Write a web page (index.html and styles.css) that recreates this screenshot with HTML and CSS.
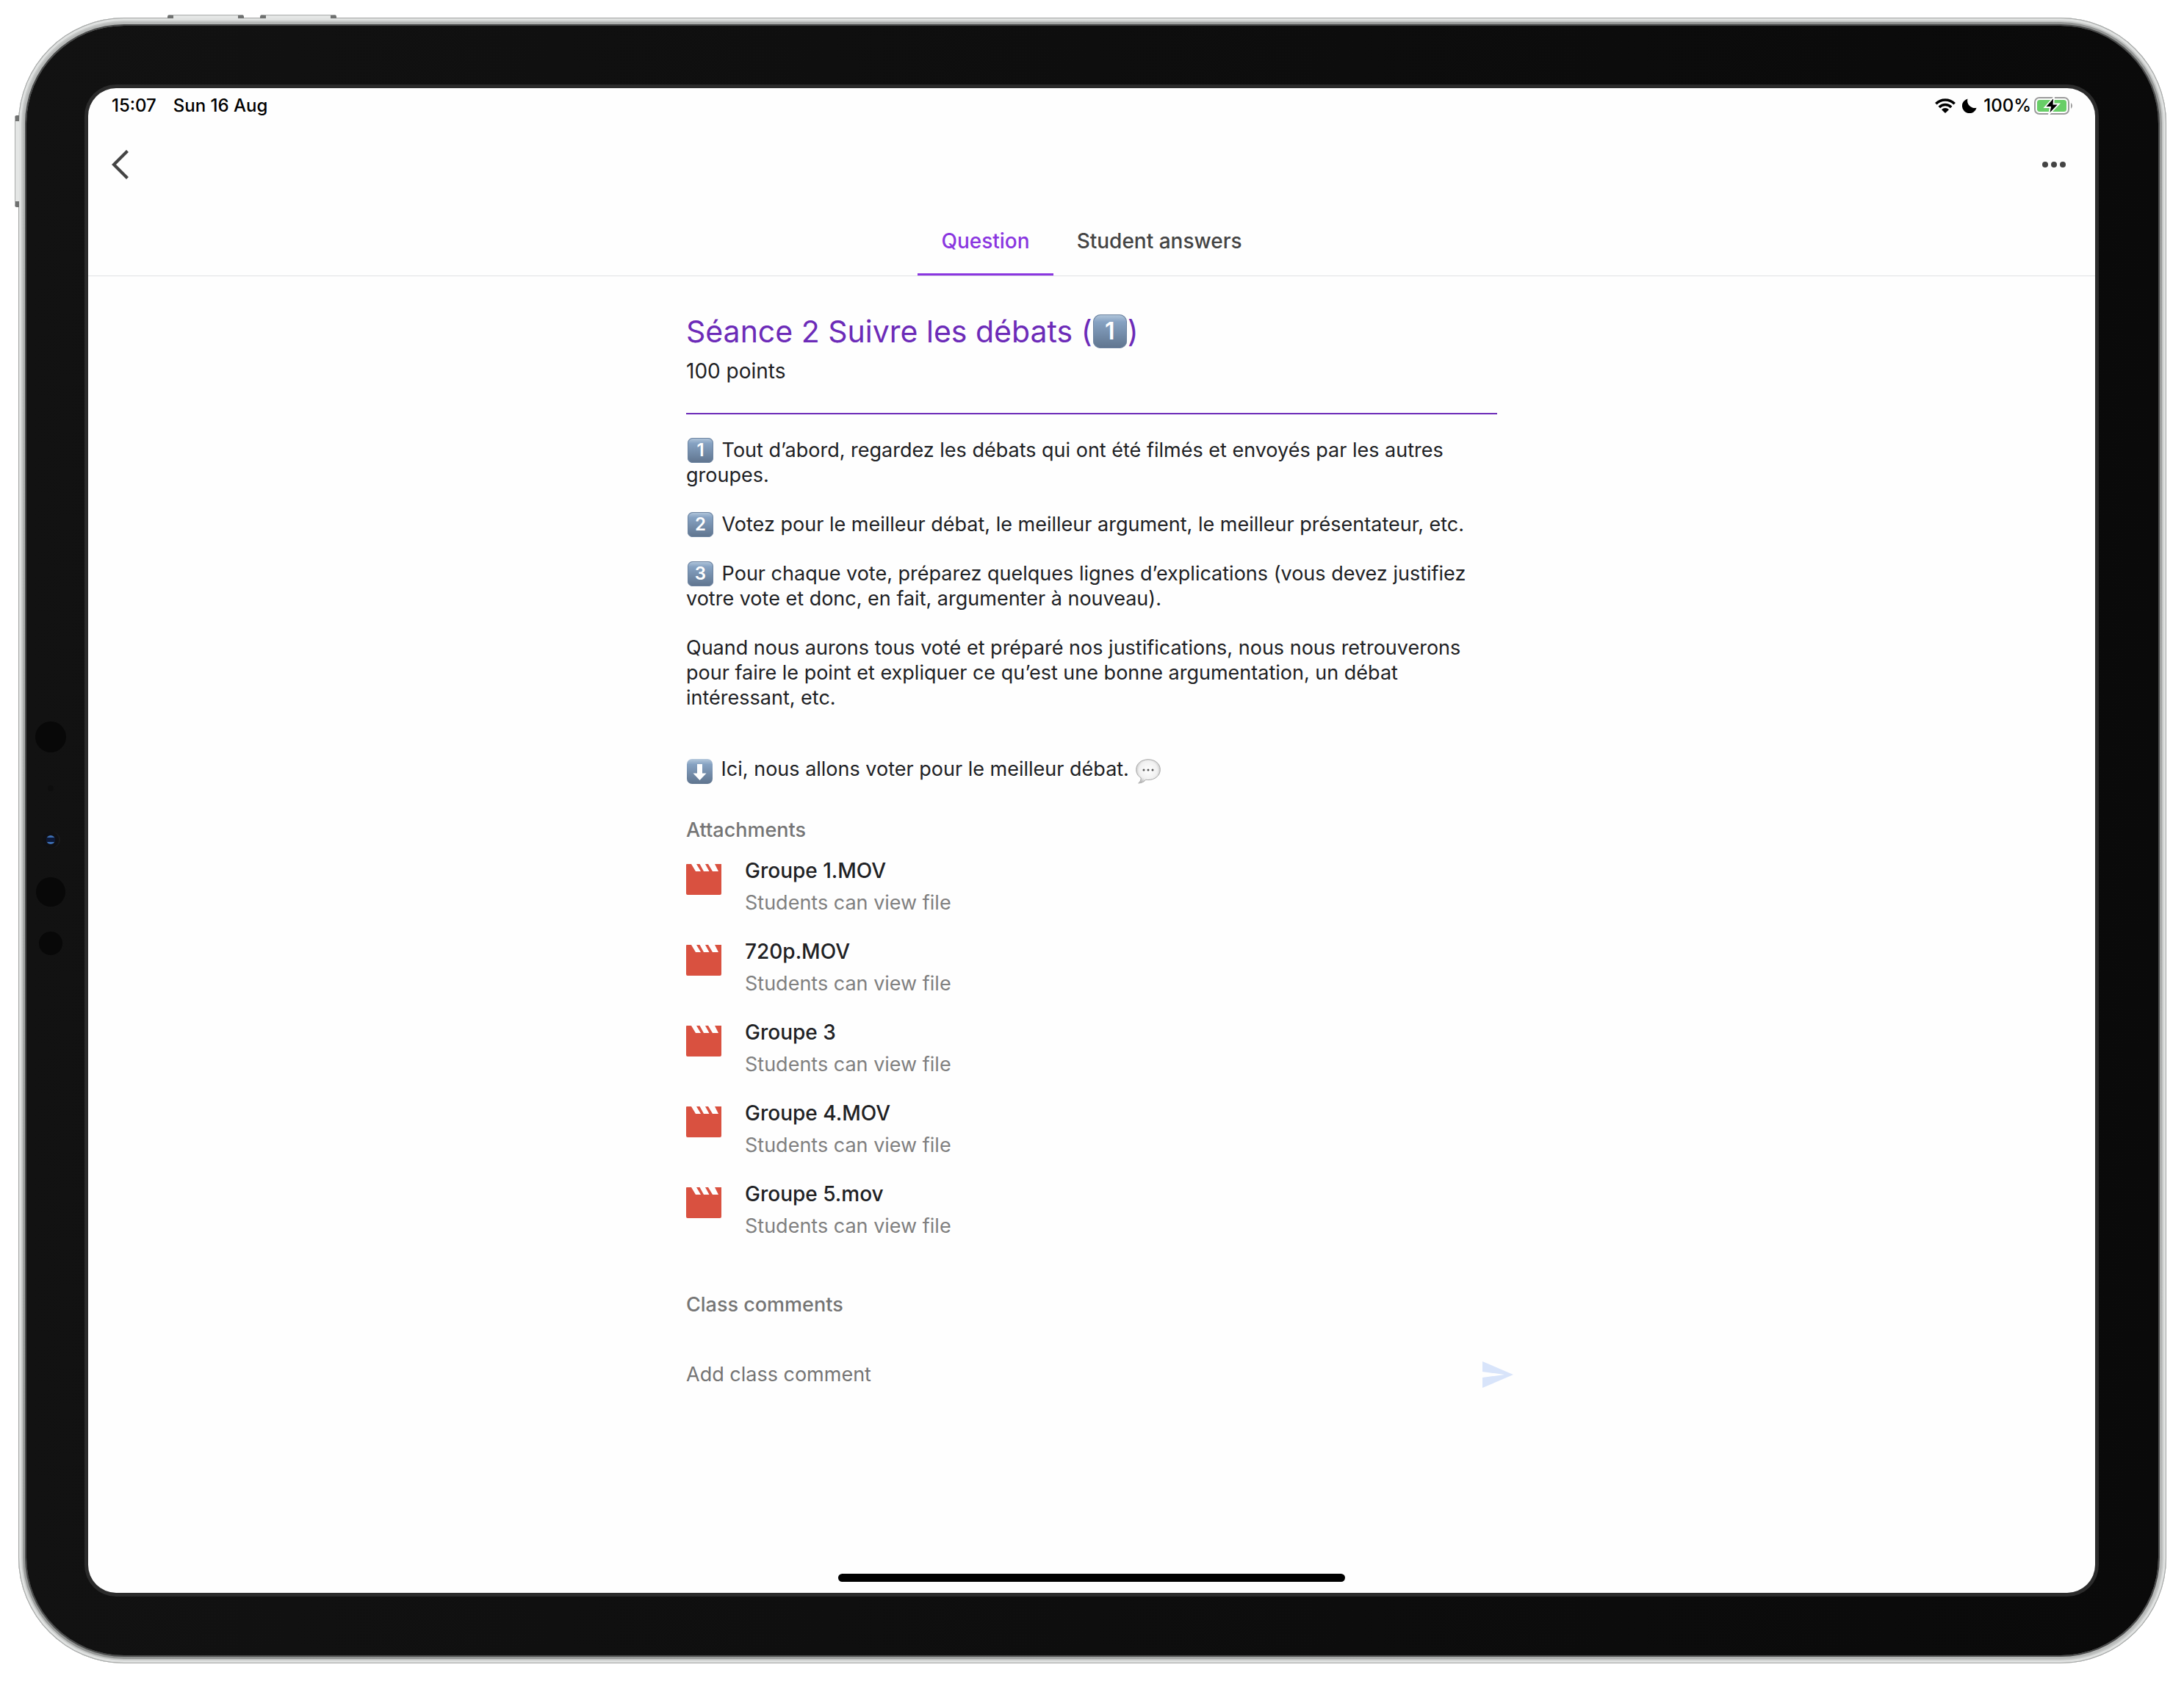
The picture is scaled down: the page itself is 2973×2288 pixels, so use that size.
FILE: index.html
```html
<!DOCTYPE html>
<html lang="fr">
<head>
<meta charset="utf-8">
<meta name="viewport" content="width=device-width, initial-scale=1">
<title>Séance 2 Suivre les débats</title>
<link rel="stylesheet" href="styles.css">
</head>
<body>
<svg class="defs" width="0" height="0" aria-hidden="true">
  <defs>
    <linearGradient id="key" x1="0" y1="0" x2="0" y2="1">
      <stop offset="0" stop-color="#b4c8dc"/><stop offset=".22" stop-color="#86a2c2"/><stop offset="1" stop-color="#5f748e"/>
    </linearGradient>
    <radialGradient id="bubble" cx=".5" cy=".45" r=".55">
      <stop offset="0" stop-color="#fff"/><stop offset=".7" stop-color="#f0f0f0"/><stop offset="1" stop-color="#bdbdbd"/>
    </radialGradient>
    <symbol id="clip" viewBox="0 0 48 42">
      <path fill="#d95140" d="M1 0H7L13 10H20L14 0H18.500L24 10H31.500L26 0H30L36 10H44L39 0H48V40a2 2 0 0 1-2 2H2a2 2 0 0 1-2-2V1a1 1 0 0 1 1-1z"/>
    </symbol>
  </defs>
</svg>
<div class="device">
  <span class="hw hw-vol-a"></span><span class="hw hw-vol-b"></span><span class="hw hw-power"></span>
  <div class="bezel">
    <svg class="sensors" width="44" height="304" viewBox="0 0 44 304" aria-hidden="true">
      <circle cx="22" cy="22" r="21" fill="#080808"/>
      <circle cx="22" cy="92" r="4" fill="#0e0e0e"/>
      <circle cx="24" cy="162" r="11" fill="#1a1a1b"/><circle cx="22" cy="162" r="11" fill="#101012"/>
      <circle cx="22" cy="162" r="6" fill="#3d6fb5"/><path d="M16 159h12v6H16z" fill="#0c1836"/>
      <circle cx="22" cy="233" r="20" fill="#080808"/>
      <circle cx="22" cy="303" r="16" fill="#080808"/>
    </svg>
    <div class="screen">
      <header>
        <div class="status">
          <span>15:07</span><span>Sun 16 Aug</span>
          <div class="status-right">
            <svg width="28" height="20" viewBox="0 0 28 20" aria-hidden="true">
              <g fill="none" stroke="#000" stroke-width="3.600"><path d="M1.300 7.300A18 18 0 0 1 26.700 7.300"/><path d="M5.800 11.900A11.600 11.600 0 0 1 22.200 11.900"/></g>
              <path d="M9 15.200A7 7 0 0 1 19 15.200L14 20z"/>
            </svg>
            <svg class="moon" width="20" height="20" viewBox="0 0 20 20" aria-hidden="true"><path d="M7.500 .5A10 10 0 1 0 19.600 12.800A10 10 0 0 1 7.500 .5z"/></svg>
            <span>100%</span>
            <svg class="battery" width="54" height="26" viewBox="0 0 54 26" aria-hidden="true">
              <rect x="1" y="2" width="46" height="22" rx="6" fill="none" stroke="#9b9b9b" stroke-width="2"/>
              <rect x="4" y="5" width="40" height="16" rx="3.500" fill="#68ce67"/>
              <path d="M50 9a5 5 0 0 1 0 8z" fill="#9b9b9b"/>
              <path d="M27 1L14.500 15H22L20 25L34 10.500H26.500z" fill="#000" stroke="#fff" stroke-width="1.800"/>
            </svg>
          </div>
        </div>
        <div class="nav">
          <button class="icon-btn" aria-label="Back"><svg width="24" height="40" viewBox="0 0 24 40"><path d="M21.500 1.500L3 20L21.500 38.500" fill="none" stroke="#444" stroke-width="4.200"/></svg></button>
          <button class="icon-btn" aria-label="More options"><svg width="32" height="8" viewBox="0 0 32 8" fill="#444"><circle cx="4" cy="4" r="4"/><circle cx="16" cy="4" r="4"/><circle cx="28" cy="4" r="4"/></svg></button>
        </div>
        <nav class="tabs">
          <a href="#question" class="tab active">Question</a>
          <a href="#answers" class="tab">Student answers</a>
        </nav>
      </header>
      <main id="question">
        <h1>Séance 2 Suivre les débats (<span class="key">1</span>)</h1>
        <p class="points">100 points</p>
        <section class="text">
          <p><span class="key">1</span> Tout d’abord, regardez les débats qui ont été filmés et envoyés par les autres groupes.</p>
          <p><span class="key">2</span> Votez pour le meilleur débat, le meilleur argument, le meilleur présentateur, etc.</p>
          <p><span class="key">3</span> Pour chaque vote, préparez quelques lignes d’explications (vous devez justifiez votre vote et donc, en fait, argumenter à nouveau).</p>
          <p>Quand nous aurons tous voté et préparé nos justifications, nous nous retrouverons pour faire le point et expliquer ce qu’est une bonne argumentation, un débat intéressant, etc.</p>
          <p class="last"><svg class="glyph arrow" width="36" height="34" viewBox="0 0 36 34" aria-hidden="true"><rect x="1" y="0" width="35" height="34" rx="7" fill="url(#key)"/><path d="M15 7h7v12.500h5.500L18.500 29L9.500 19.500H15z" fill="#fff"/></svg> Ici, nous allons voter pour le meilleur débat. <svg class="glyph" width="36" height="34" viewBox="0 0 36 34" aria-hidden="true"><path d="M18 .7C8.500 .7 1.700 6.500 1.700 14.500c0 5 2.500 9 6.500 11.300 0 2.800-1 5.200-3.500 7.200 4.500-.3 8-2 10-4.800 1 .2 2 .3 3.300 .3C27.500 28.500 34.300 22.500 34.300 14.500S27.500 .7 18 .7z" fill="url(#bubble)" stroke="#a9a9a9" stroke-width="1"/><g fill="#555"><circle cx="12" cy="15" r="1.500"/><circle cx="18" cy="15" r="1.500"/><circle cx="24" cy="15" r="1.500"/></g></svg></p>
        </section>
        <section>
          <h2>Attachments</h2>
          <ul class="files">
            <li><svg class="clip" width="48" height="42" aria-hidden="true"><use href="#clip"/></svg><div><a href="#file-1">Groupe 1.MOV</a><p>Students can view file</p></div></li>
            <li><svg class="clip" width="48" height="42" aria-hidden="true"><use href="#clip"/></svg><div><a href="#file-2">720p.MOV</a><p>Students can view file</p></div></li>
            <li><svg class="clip" width="48" height="42" aria-hidden="true"><use href="#clip"/></svg><div><a href="#file-3">Groupe 3</a><p>Students can view file</p></div></li>
            <li><svg class="clip" width="48" height="42" aria-hidden="true"><use href="#clip"/></svg><div><a href="#file-4">Groupe 4.MOV</a><p>Students can view file</p></div></li>
            <li><svg class="clip" width="48" height="42" aria-hidden="true"><use href="#clip"/></svg><div><a href="#file-5">Groupe 5.mov</a><p>Students can view file</p></div></li>
          </ul>
        </section>
        <section class="comments">
          <h2>Class comments</h2>
          <form class="composer">
            <input type="text" placeholder="Add class comment" aria-label="Add class comment">
            <button type="button" class="icon-btn" aria-label="Send"><svg width="42" height="36" viewBox="0 0 42 36"><path d="M0 0L42 18L0 36V22L30 18L0 14z" fill="#d8e4fa"/></svg></button>
          </form>
        </section>
      </main>
      <div class="home"></div>
    </div>
  </div>
</div>
</body>
</html>
```
FILE: styles.css
```css
* { box-sizing: border-box; }
body {
  margin: 0;
  min-height: 100vh;
  padding: 24px 24px 24px 25px;
  display: flex;
  background: #fff;
  color: #202124;
  font: 400 27px/34px Inter, "Liberation Sans", sans-serif;
}
h1, h2, p, ul { margin: 0; padding: 0; font-weight: 400; }
.defs { position: absolute; }

.device {
  flex: 1;
  display: flex;
  position: relative;
  padding: 11px;
  border-radius: 144px;
  background: linear-gradient(135deg, #b9bbba, #8f9190 50%, #b9bbba);
  box-shadow: inset 0 0 0 1px #a3a5a4, inset 0 0 0 4px #dfe1e0, inset 0 0 0 6px #c6c8c7;
}
.bezel {
  flex: 1;
  display: flex;
  position: relative;
  padding: 80px 81px 80px 79px;
  border-radius: 133px;
  background: linear-gradient(90deg, #121212, #0a0a0a);
  box-shadow: 0 0 0 2px #4a4b4b;
}
.sensors {
  position: absolute;
  left: 11px;
  top: 50%;
  margin-top: -163px;
  overflow: visible;
}
.hw { position: absolute; background: #e4e6e5; border: 1px solid #a9abaa; }
.hw-vol-a, .hw-vol-b { top: -4px; height: 5px; width: 104px; border-width: 1px 8px 0; border-color: #a9abaa #6f7170; border-radius: 3px 3px 0 0; }
.hw-vol-a { left: 203px; }
.hw-vol-b { left: 329px; }
.hw-power { left: -5px; top: 133px; width: 6px; height: 125px; border-width: 8px 0 8px 1px; border-color: #6f7170 #a9abaa; border-radius: 3px 0 0 3px; }

.screen {
  flex: 1;
  display: flex;
  flex-direction: column;
  margin: 5px;
  border-radius: 38px;
  background: #fefefe;
  box-shadow: 0 0 0 5px #2b2b2b;
}
.status {
  display: flex;
  align-items: center;
  gap: 23px;
  height: 48px;
  padding: 0 29px 0 32px;
  color: #000;
  font-size: 24px;
  font-weight: 500;
}
.status-right { display: flex; align-items: center; margin-left: auto; }
.moon { margin: 0 9px; }
.battery { margin-left: 4px; }
.nav {
  display: flex;
  align-items: center;
  justify-content: space-between;
  height: 112px;
  padding: 0 40px 0 32px;
}
.icon-btn { display: flex; padding: 0; border: 0; background: none; }
.tabs {
  display: flex;
  justify-content: center;
  height: 96px;
  border-bottom: 1px solid #dfe1e3;
}
.tab {
  display: flex;
  align-items: center;
  padding: 4px 32px 0;
  border-bottom: 3px solid transparent;
  color: #444;
  font-size: 28px;
  font-weight: 500;
  text-decoration: none;
}
.tab.active { color: #8a36e0; border-color: #8a36e0; }

main {
  width: 100%;
  max-width: 1104px;
  margin: 0 auto;
  padding-top: 48px;
}
h1 { color: #6c2bb8; font-size: 41px; line-height: 54px; }
.key {
  display: inline-flex;
  align-items: center;
  justify-content: center;
  width: 35px;
  height: 34px;
  margin: -4px 4px -4px 2px;
  border-radius: 7px;
  background: linear-gradient(#b4c8dc, #86a2c2 22%, #5f748e);
  box-shadow: inset 0 0 0 1px #6c83a0;
  color: #fff;
  font-size: 24px;
  font-weight: 600;
  line-height: 24px;
  vertical-align: 1px;
}
h1 .key {
  width: 46px;
  height: 46px;
  margin: -4px 1px;
  border-radius: 10px;
  font-size: 32px;
  line-height: 32px;
  vertical-align: 4px;
}
.points { margin-top: 10px; padding-bottom: 40px; border-bottom: 2px solid #6c2bb8; font-size: 28px; }
.text { padding-top: 32px; }
.text p + p { margin-top: 33px; }
.text .last { margin-top: 63px; }
.glyph { margin-block: -4px; vertical-align: -7px; }
.arrow { margin-right: 4px; }
h2 { margin-top: 49px; color: #757575; font-size: 27px; font-weight: 500; }
.files { margin-top: 21px; list-style: none; display: grid; gap: 32px; }
.files li { display: flex; gap: 32px; }
.files a { display: block; color: #202124; font-size: 28px; font-weight: 500; text-decoration: none; }
.files p { margin-top: 10px; color: #808080; }
.clip { margin-top: 8px; }
.comments h2 { margin-top: 73px; }
.composer { display: flex; align-items: center; height: 50px; margin: 53px -22px 0 0; }
.composer input {
  flex: 1;
  padding: 0;
  border: 0;
  background: none;
  color: inherit;
  font: inherit;
}
.composer input::placeholder { color: #757575; opacity: 1; }
.home {
  width: 690px;
  max-width: 50%;
  height: 11px;
  margin: auto auto 15px;
  border-radius: 6px;
  background: #000;
}
```
